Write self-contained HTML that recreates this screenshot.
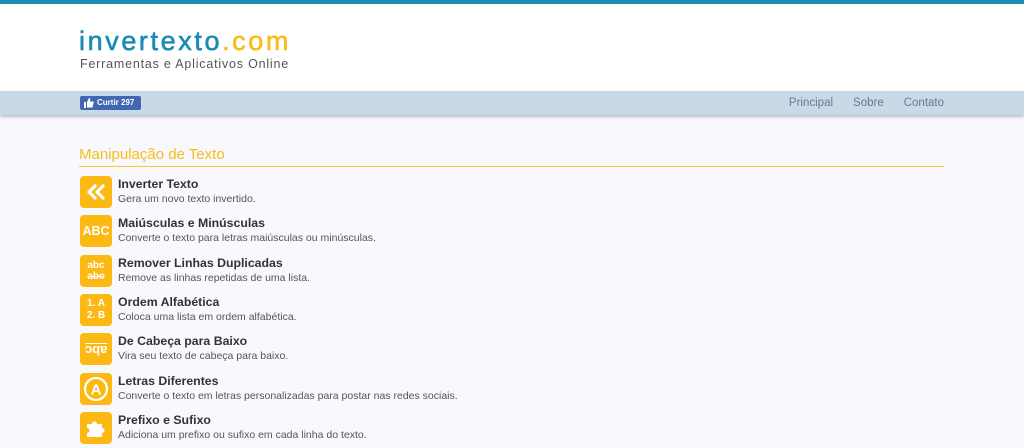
<!DOCTYPE html>
<html><head><meta charset="utf-8"><style>
*{margin:0;padding:0;box-sizing:border-box}
body{width:1024px;height:448px;overflow:hidden;background:#f7f9fc;font-family:"Liberation Sans",Arial,sans-serif;position:relative}
.top{height:4px;background:#1b8bb4}
.hdr{height:87px;background:#fff;position:relative}
.logo{position:absolute;left:79px;top:22px;font-size:27px;letter-spacing:2.6px;color:#1b8bb4;line-height:30px;-webkit-text-stroke:0.6px currentColor}
.logo span{color:#f7bd1c}
.sub{position:absolute;left:80px;top:53px;font-size:12.5px;letter-spacing:0.8px;color:#555}
.nav{height:24px;background:#c8d9e8;box-shadow:0 2px 3px rgba(0,0,0,.25);position:relative}
.fb{position:absolute;left:80px;top:5px;width:61px;height:14px;background:#4267b2;border-radius:2px;color:#fff;font-size:8px;font-weight:bold;line-height:14px;padding-left:17px}
.fb svg{position:absolute;left:4px;top:2px}
.links{position:absolute;right:80px;top:0;line-height:24px;font-size:11.5px;color:#6b7a8c}
.links a{margin-left:20px}
h2{position:absolute;left:79px;top:146px;width:865px;font-weight:normal;font-size:15px;color:#f7bd1c;border-bottom:1px solid #f7c93a;padding-bottom:2px;line-height:18px}
.it{position:absolute;left:80px;height:32px}
.ic{position:absolute;left:0;top:0;width:32px;height:32px;background:#fdb913;border-radius:4px;color:#fff;font-weight:bold;text-align:center;display:flex;align-items:center;justify-content:center}
.t{position:absolute;left:38px;top:1px;font-size:12.3px;font-weight:bold;color:#333;white-space:nowrap}
.d{position:absolute;left:38px;top:17px;font-size:10.5px;color:#555;white-space:nowrap}
</style></head><body>
<div class="top"></div>
<div class="hdr"><div class="logo">invertexto<span>.com</span></div><div class="sub">Ferramentas e Aplicativos Online</div></div>
<div class="nav"><div class="fb"><svg width="10" height="10" viewBox="0 0 10 10"><path d="M0 4h2v6H0zM3 4l2-4c1 0 1.5.5 1.2 2L6 3.5h3c1 0 1 1 .5 1.5l-1 4.5H3z" fill="#fff"/></svg>Curtir 297</div>
<div class="links"><a>Principal</a><a>Sobre</a><a>Contato</a></div></div>
<h2>Manipulação de Texto</h2>
<div class="it" style="top:176px"><div class="ic"><svg width="20" height="16" viewBox="0 0 20 16"><path d="M9 2L3 8l6 6M17 2l-6 6 6 6" fill="none" stroke="#fff" stroke-width="3.2" stroke-linecap="round" stroke-linejoin="round"/></svg></div><div class="t">Inverter Texto</div><div class="d">Gera um novo texto invertido.</div></div>
<div class="it" style="top:215px"><div class="ic" style="font-size:12.5px">ABC</div><div class="t">Maiúsculas e Minúsculas</div><div class="d">Converte o texto para letras maiúsculas ou minúsculas.</div></div>
<div class="it" style="top:255px"><div class="ic" style="font-size:10px;line-height:11px;flex-direction:column">abc<br><s>abc</s></div><div class="t">Remover Linhas Duplicadas</div><div class="d">Remove as linhas repetidas de uma lista.</div></div>
<div class="it" style="top:294px"><div class="ic" style="font-size:10px;line-height:12px;flex-direction:column">1. A<br>2. B</div><div class="t">Ordem Alfabética</div><div class="d">Coloca uma lista em ordem alfabética.</div></div>
<div class="it" style="top:333px"><div class="ic" style="font-size:13px"><span style="display:inline-block;transform:rotate(180deg);border-bottom:1.5px solid #fff;line-height:12px">abc</span></div><div class="t">De Cabeça para Baixo</div><div class="d">Vira seu texto de cabeça para baixo.</div></div>
<div class="it" style="top:373px"><div class="ic"><svg width="26" height="26" viewBox="0 0 26 26"><circle cx="13" cy="13" r="11" fill="none" stroke="#fff" stroke-width="2.2"/><text x="13" y="18.5" text-anchor="middle" fill="#fff" font-size="15" font-weight="bold" font-family="Liberation Sans">A</text></svg></div><div class="t">Letras Diferentes</div><div class="d">Converte o texto em letras personalizadas para postar nas redes sociais.</div></div>
<div class="it" style="top:412px"><div class="ic"><svg width="22" height="22" viewBox="0 0 22 22"><path d="M2 7h5a2.5 2.5 0 1 1 5 0h5v4a2.5 2.5 0 1 1 0 5v4H2v-4a2.5 2.5 0 1 0 0-5z" fill="#fff"/></svg></div><div class="t">Prefixo e Sufixo</div><div class="d">Adiciona um prefixo ou sufixo em cada linha do texto.</div></div>
</body></html>
